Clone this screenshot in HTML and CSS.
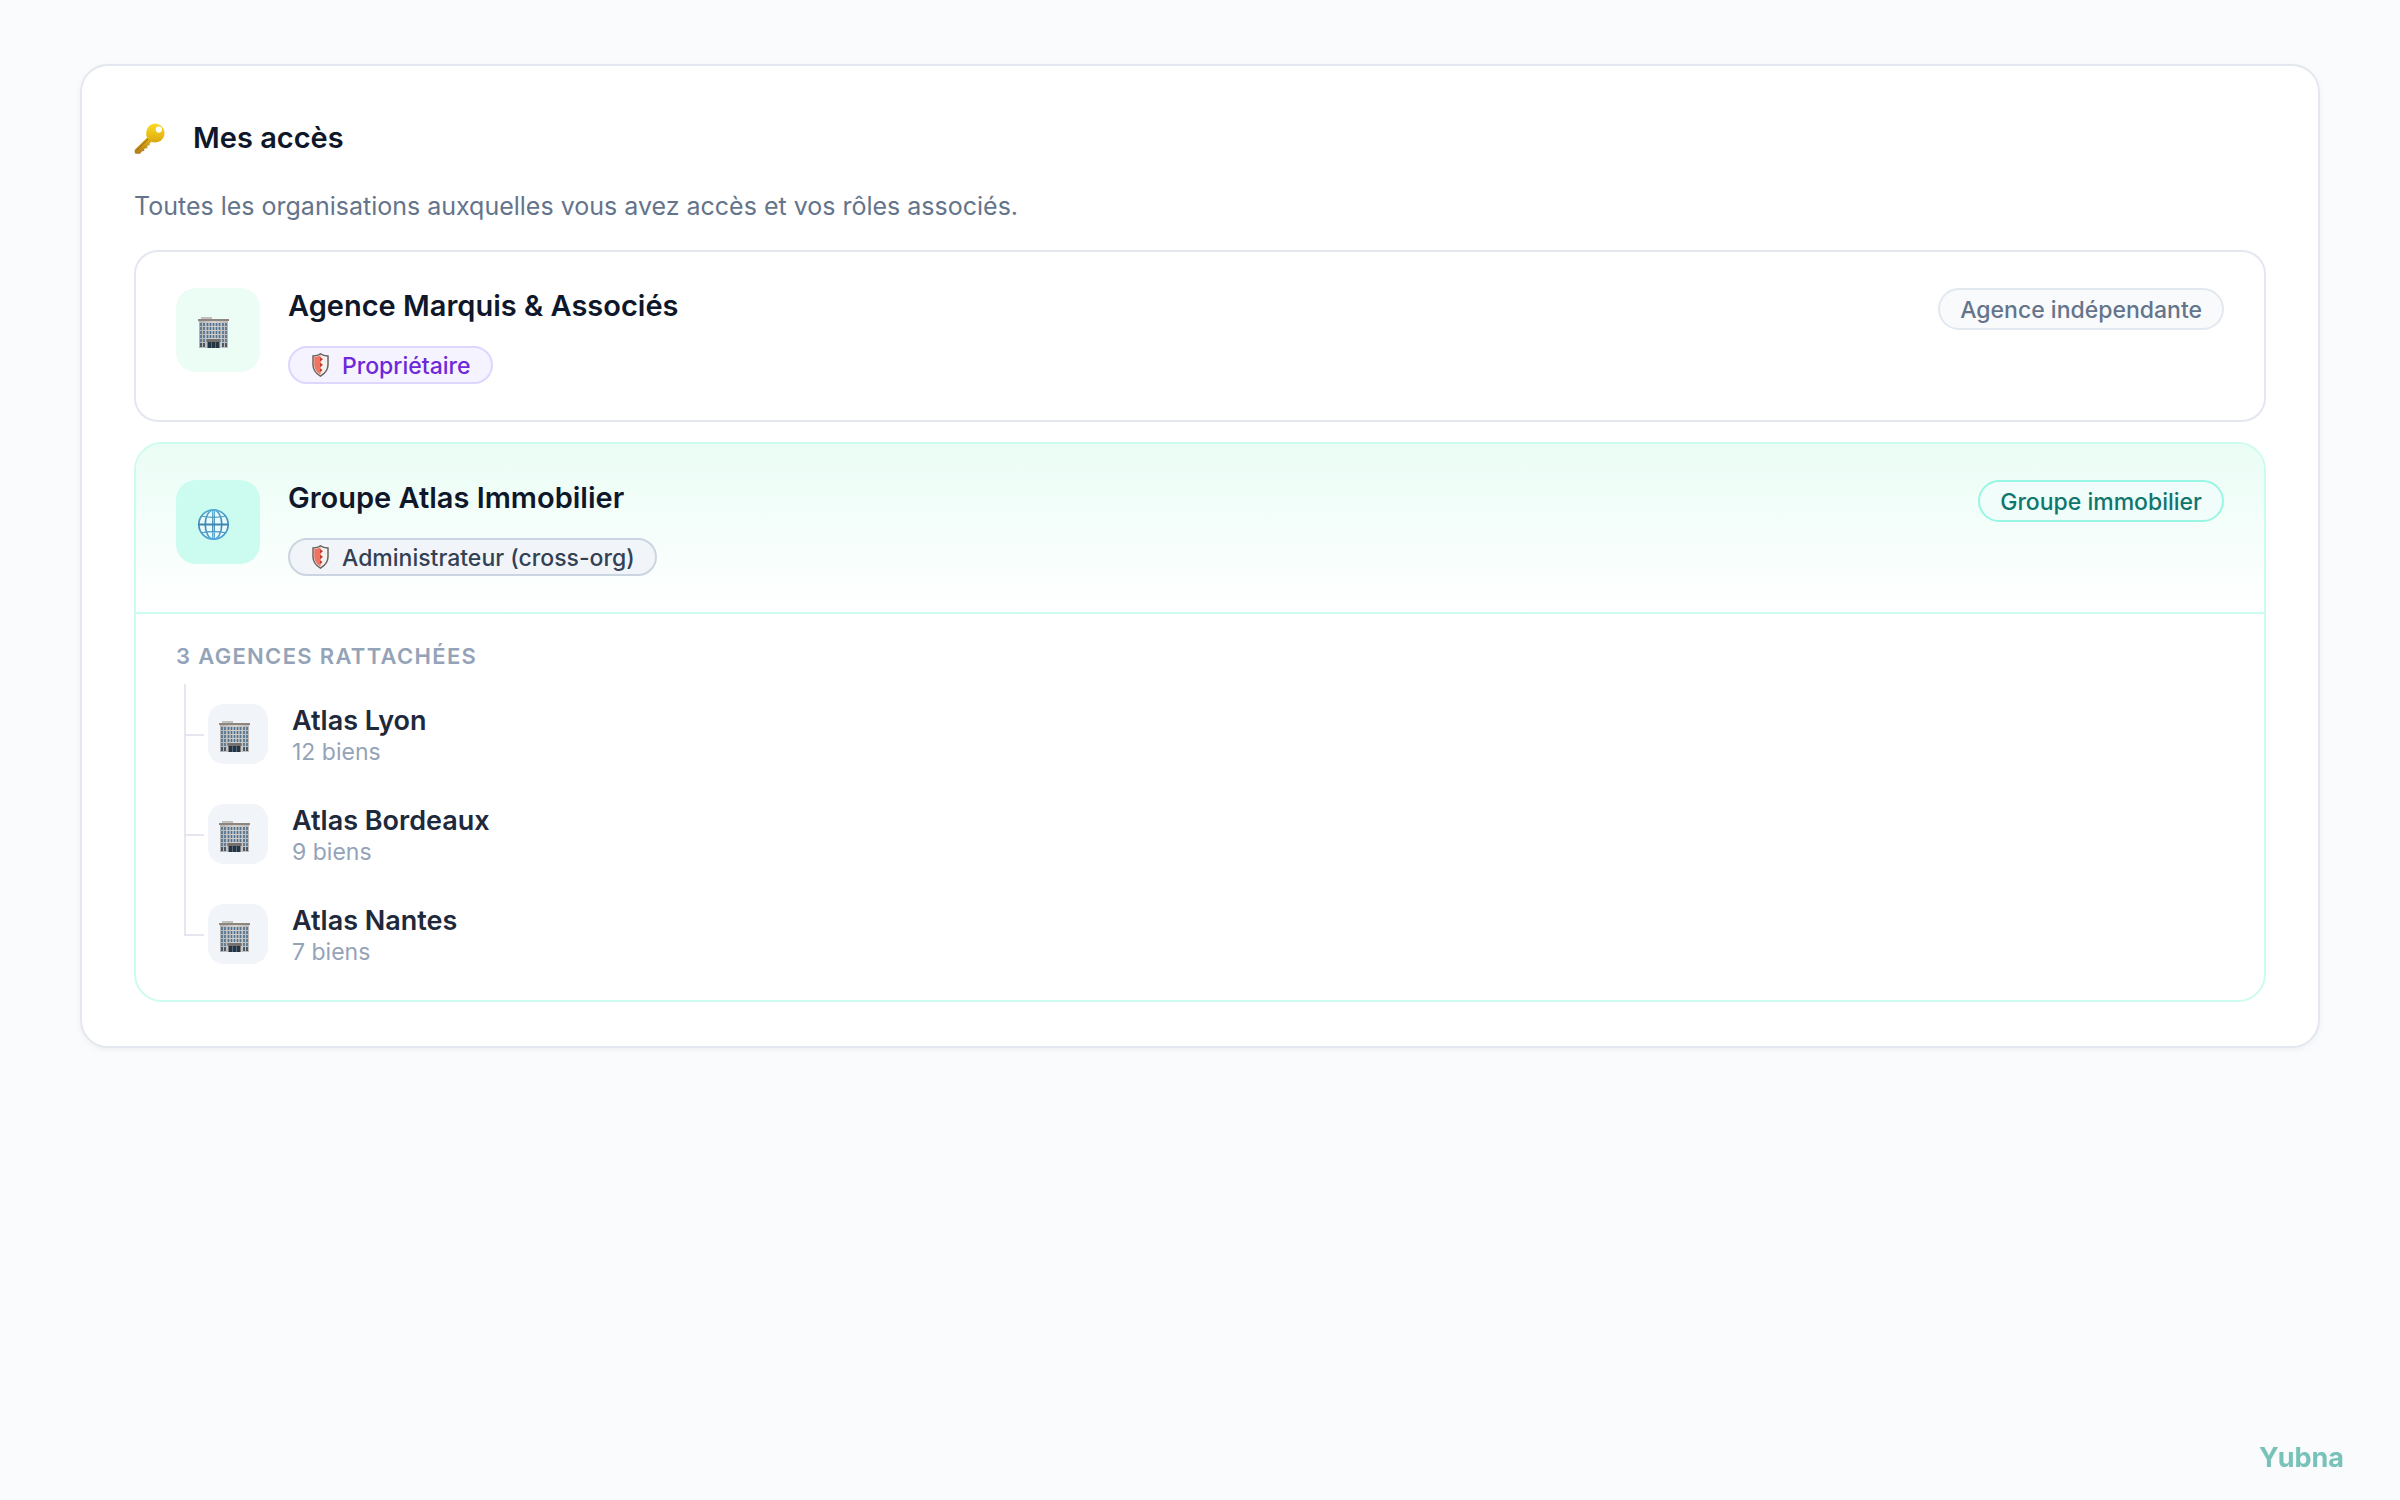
FILE: index.html
```html
<!DOCTYPE html>
<html lang="fr">
<head>
    <meta charset="UTF-8">
    <meta name="viewport" content="width=device-width, initial-scale=1.0">
    <title>Mes accès</title>
    <link rel="stylesheet" href="styles.css">
</head>
<body>
    <!-- Icônes partagées -->
    <svg class="sprite" aria-hidden="true">
        <defs>
            <linearGradient id="gold" x1="0" y1="0" x2="0" y2="1">
                <stop offset="0" stop-color="#f7dc24"/>
                <stop offset="0.5" stop-color="#e4b312"/>
                <stop offset="1" stop-color="#b07a1c"/>
            </linearGradient>
            <linearGradient id="wall" x1="0" y1="0" x2="1" y2="0">
                <stop offset="0" stop-color="#b3b1b0"/>
                <stop offset="0.5" stop-color="#d6d3d1"/>
                <stop offset="1" stop-color="#bdb9b6"/>
            </linearGradient>
            <linearGradient id="blue" x1="0" y1="0" x2="0" y2="1">
                <stop offset="0" stop-color="#55aed6"/>
                <stop offset="0.5" stop-color="#3d86ad"/>
                <stop offset="1" stop-color="#4fa6d8"/>
            </linearGradient>
            <symbol id="building" viewBox="0 0 31 31">
                <rect x="3" y="0" width="11" height="3" fill="#c3bfbc"/>
                <rect x="1" y="3" width="29" height="28" fill="url(#wall)"/>
                <rect x="0" y="2" width="31" height="2" fill="#8d8580"/>
                <path d="M3 6v19M6 6v19M9.500 6v19M12.500 6v19M15.500 6v19M18.500 6v19M21.500 6v19M25 6v19M28 6v19" stroke="#4f7391" stroke-width="1.700" stroke-dasharray="3 1"/>
                <path d="M3 26v4M6 26v4M25 26v4M28 26v4" stroke="#34475a" stroke-width="1.700"/>
                <rect x="8.500" y="22" width="14" height="3" fill="#73706e"/>
                <rect x="9.500" y="25" width="12" height="6" fill="#263544"/>
                <path d="M13.500 25v6M17.500 25v6" stroke="#65798a" stroke-width="0.800"/>
            </symbol>
            <symbol id="globe" viewBox="0 0 30 30">
                <circle cx="15" cy="15" r="14.200" fill="#e9fbff"/>
                <g fill="none" stroke="url(#blue)" stroke-width="1.600">
                    <circle cx="15" cy="15" r="14.200"/>
                    <ellipse cx="15" cy="15" rx="8" ry="14.200"/>
                    <path d="M14.200 0.800h1.600v28.400h-1.600zM3.500 7q11.500 2.200 23 0M1 14.600h28v0.800H1zM3.500 23q11.500-2.200 23 0" stroke-width="1.100"/>
                </g>
            </symbol>
            <symbol id="shield" viewBox="0 0 22 24">
                <path d="M10.500 0.800C8.500 2.200 5.500 2.800 3 2.900v8.800c0 4.800 2.800 8.600 7.500 11.500 4.700-2.900 7.500-6.700 7.500-11.500V2.900c-2.500-.1-5.500-.7-7.500-2.100z" fill="#f4f1ef" stroke="#6b6560" stroke-width="1.500"/>
                <path d="M10.500 2.300C8.600 3.300 6 3.800 4.200 4v7.700c0 4 2.300 7.100 6.300 9.800z" fill="#ee7563"/>
                <path d="M10 4l3 2.200-3 2.600zM10 9.600l3 2.200-3 2.600zM10 15.200l2.600 1.800-2.600 2.200z" fill="#c33c2e"/>
            </symbol>
        </defs>
    </svg>

    <main class="page">
        <section class="panel">
            <div class="panel-header">
                <svg class="icon-key" viewBox="0 0 30 30" aria-hidden="true">
                    <path fill="url(#gold)" fill-rule="evenodd" d="M20.500 0.500a9.200 9.200 0 0 1 2.500 18c-2.400.7-4.500.4-6.200-.4l-1.800 1.900.3 1.600-2 .2-.5.600.2 2-2.200.1-1 1 .1 1.700-2.100.2-1.800 2c-.6.600-4.500.5-5-.2-.6-.9-.6-3 0-3.600L12.700 14c-1.200-2.400-1.300-5 0-8.200a9.300 9.300 0 0 1 7.800-5.300zM24 3.400a3 3 0 1 0 0 6 3 3 0 0 0 0-6z"/>
                    <path d="M13.500 15.500L2.500 26.500" stroke="#a46e12" stroke-width="1" fill="none"/>
                </svg>
                <h1 class="panel-title">Mes accès</h1>
            </div>
            <p class="panel-text">Toutes les organisations auxquelles vous avez accès et vos rôles associés.</p>

            <div class="cards">
                <article class="card">
                    <div class="card-header">
                        <div class="card-icon">
                            <svg class="icon" aria-hidden="true"><use href="#building"/></svg>
                        </div>
                        <div class="card-info">
                            <h2 class="card-title">Agence Marquis &amp; Associés</h2>
                            <span class="role role-owner">
                                <svg class="icon-shield" aria-hidden="true"><use href="#shield"/></svg>
                                <span class="role-label">Propriétaire</span>
                            </span>
                        </div>
                        <span class="badge">Agence indépendante</span>
                    </div>
                </article>

                <article class="card card-group">
                    <div class="card-header">
                        <div class="card-icon">
                            <svg class="icon" aria-hidden="true"><use href="#globe"/></svg>
                        </div>
                        <div class="card-info">
                            <h2 class="card-title">Groupe Atlas Immobilier</h2>
                            <span class="role">
                                <svg class="icon-shield" aria-hidden="true"><use href="#shield"/></svg>
                                <span class="role-label">Administrateur (cross-org)</span>
                            </span>
                        </div>
                        <span class="badge badge-group">Groupe immobilier</span>
                    </div>
                    <div class="agencies">
                        <h3 class="agencies-title">3 agences rattachées</h3>
                        <ul class="tree">
                            <li class="agency">
                                <div class="agency-icon"><svg class="icon" aria-hidden="true"><use href="#building"/></svg></div>
                                <div class="agency-info">
                                    <div class="agency-name">Atlas Lyon</div>
                                    <div class="agency-count">12 biens</div>
                                </div>
                            </li>
                            <li class="agency">
                                <div class="agency-icon"><svg class="icon" aria-hidden="true"><use href="#building"/></svg></div>
                                <div class="agency-info">
                                    <div class="agency-name">Atlas Bordeaux</div>
                                    <div class="agency-count">9 biens</div>
                                </div>
                            </li>
                            <li class="agency">
                                <div class="agency-icon"><svg class="icon" aria-hidden="true"><use href="#building"/></svg></div>
                                <div class="agency-info">
                                    <div class="agency-name">Atlas Nantes</div>
                                    <div class="agency-count">7 biens</div>
                                </div>
                            </li>
                        </ul>
                    </div>
                </article>
            </div>
        </section>
    </main>

    <div class="watermark">Yubna</div>
</body>
</html>
```
FILE: styles.css
```css
* {
    box-sizing: border-box;
}
body {
    margin: 0;
    background: #fafbfd;
    color: #0f172a;
    font-family: Inter, "Liberation Sans", sans-serif;
}
h1, h2, h3, p, ul {
    margin: 0;
    padding: 0;
}
.sprite {
    position: absolute;
    width: 0;
    height: 0;
}
.page {
    padding: 64px 80px;
}

/* Panneau principal */
.panel {
    padding: 50px 52px 44px;
    background: #fff;
    border: 2px solid #e4e7f0;
    border-radius: 28px;
    box-shadow: 0 2px 6px rgba(15, 23, 42, 0.05);
}
.panel-header {
    display: flex;
    align-items: center;
    gap: 28px;
}
.icon-key {
    width: 31px;
    height: 31px;
}
.panel-title {
    font-size: 29px;
    font-weight: 600;
    line-height: 44px;
}
.panel-text {
    margin: 28px 0 26px;
    color: #64748b;
    font-size: 25px;
    line-height: 36px;
}

/* Cartes */
.cards {
    display: flex;
    flex-direction: column;
    gap: 20px;
}
.card {
    border: 2px solid #e4e7f0;
    border-radius: 24px;
    background: #fff;
    overflow: hidden;
}
.card-header {
    display: flex;
    align-items: flex-start;
    gap: 28px;
    padding: 36px 40px;
}
.card-icon {
    display: flex;
    align-items: center;
    flex-shrink: 0;
    width: 84px;
    height: 84px;
    padding: 5px 0 0 22px;
    background: #ecfdf5;
    border-radius: 20px;
}
.icon {
    width: 31px;
    height: 31px;
}
.card-info {
    display: flex;
    flex: 1;
    flex-direction: column;
    align-items: flex-start;
    gap: 22px;
}
.card-title {
    font-size: 29px;
    font-weight: 600;
    line-height: 36px;
}
.role {
    display: inline-flex;
    align-items: center;
    gap: 10px;
    height: 38px;
    padding: 0 20px;
    border: 2px solid #cbd5e1;
    border-radius: 19px;
    background: #f1f5f9;
    color: #334155;
    font-size: 23px;
    font-weight: 500;
}
.role-label {
    padding-top: 2px;
}
.role-owner {
    border-color: #ddd6fe;
    background: #f5f3ff;
    color: #6d28d9;
}
.icon-shield {
    width: 22px;
    height: 24px;
}
.badge {
    padding: 2px 20px 0;
    border: 2px solid #e2e8f0;
    border-radius: 21px;
    background: #f8fafc;
    color: #64748b;
    font-size: 23px;
    font-weight: 500;
    line-height: 36px;
}

/* Groupe */
.card-group {
    border-color: #ccfbef;
    border-radius: 28px;
}
.card-group .card-header {
    border-bottom: 2px solid #ccfbef;
    background: linear-gradient(180deg, #eafdf5, #fff);
}
.card-group .card-icon {
    background: #ccfbef;
}
.badge-group {
    border-color: #99f6e4;
    background: #f0fdfa;
    color: #0f766e;
}
.agencies {
    padding: 28px 40px 16px;
}
.agencies-title {
    color: #94a3b8;
    font-size: 22px;
    font-weight: 600;
    line-height: 28px;
    letter-spacing: 0.06em;
    text-transform: uppercase;
}
.tree {
    margin: 14px 0 0 8px;
    list-style: none;
}
.agency {
    position: relative;
    display: flex;
    align-items: center;
    gap: 24px;
    height: 100px;
    padding-left: 24px;
}
.agency::before {
    content: "";
    position: absolute;
    top: 0;
    left: 0;
    width: 2px;
    height: 100%;
    background: #e4e7f0;
}
.agency::after {
    content: "";
    position: absolute;
    top: 50%;
    left: 0;
    width: 20px;
    height: 2px;
    background: #e4e7f0;
}
.agency:last-child::before {
    height: 50%;
}
.agency-icon {
    display: flex;
    align-items: center;
    width: 60px;
    height: 60px;
    padding: 5px 0 0 11px;
    background: #f1f5f9;
    border-radius: 16px;
}
.agency-info {
    padding-top: 2px;
}
.agency-name {
    color: #1e293b;
    font-size: 27px;
    font-weight: 600;
    line-height: 34px;
}
.agency-count {
    color: #94a3b8;
    font-size: 23px;
    line-height: 28px;
}

.watermark {
    position: fixed;
    right: 56px;
    bottom: 26px;
    color: #79c2b9;
    font-size: 27px;
    font-weight: 700;
    line-height: 32px;
}
```
